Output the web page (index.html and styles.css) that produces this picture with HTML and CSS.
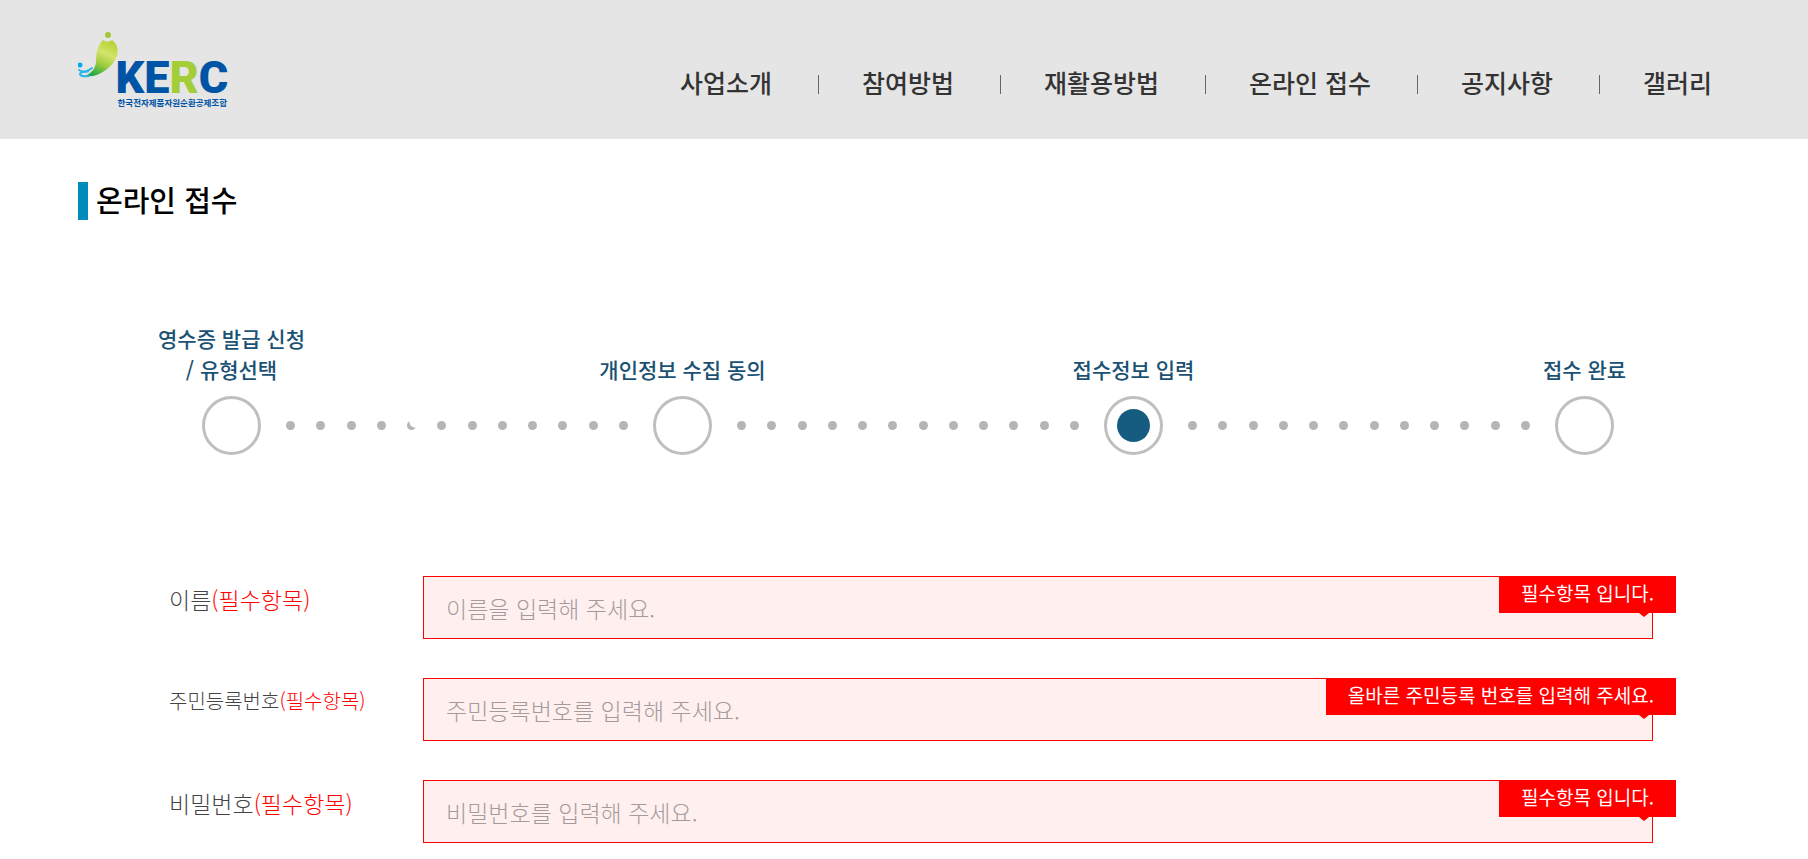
FILE: index.html
```
<!DOCTYPE html>
<html lang="ko">

<head>
    <meta charset="UTF-8">
    <meta name="viewport" content="width=device-width, initial-scale=1.0">
    <title>온라인 접수</title>
    <link rel="stylesheet" href="styles.css">
</head>

<body>
    <header class="header">
        <a href="#" class="logo" aria-label="KERC 한국전자제품자원순환공제조합">
            <svg width="152" height="80" viewBox="0 0 304 160">
                <defs>
                    <linearGradient id="leaf" x1="0.7" y1="0" x2="0.3" y2="1">
                        <stop offset="0" stop-color="#b5d334" />
                        <stop offset="0.35" stop-color="#d3e36b" />
                        <stop offset="0.65" stop-color="#9ccb3b" />
                        <stop offset="1" stop-color="#1fa64a" />
                    </linearGradient>
                </defs>
                <ellipse cx="60" cy="6" rx="6" ry="6" fill="#a2c73b" />
                <path d="M50 16 Q60 23 68 16 C77 22 83 36 77 50 C71 64 62 72 51 79 C40 87 28 90 14 88 C24 84 31 77 34 69 C37 61 36 52 37 43 C38 35 42 24 50 16Z" fill="url(#leaf)" />
                <circle cx="4" cy="66" r="5" fill="#00aeef" />
                <g fill="none" stroke="#29b6ea" stroke-width="4" stroke-linecap="round">
                    <path d="M2 76 Q9 81 18 78 Q24 75 28 72" />
                    <path d="M20 79 Q5 79 4 84 Q5 90 21 88" />
                </g>
                <text x="75" y="122" class="logo-name">KE<tspan class="logo-green">R</tspan>C</text>
                <text x="79" y="148" class="logo-sub">한국전자제품자원순환공제조합</text>
            </svg>
        </a>
        <nav>
            <ul class="menu">
                <li><a href="#">사업소개</a></li>
                <li><a href="#">참여방법</a></li>
                <li><a href="#">재활용방법</a></li>
                <li><a href="#">온라인 접수</a></li>
                <li><a href="#">공지사항</a></li>
                <li><a href="#">갤러리</a></li>
            </ul>
        </nav>
    </header>

    <main class="content">
        <h1 class="page-title">온라인 접수</h1>

        <div class="steps">
            <div class="step">
                <span class="step-name">영수증 발급 신청<br>/ 유형선택</span>
                <span class="step-circle"></span>
            </div>
            <div class="dots">
                <i></i><i></i><i></i><i></i><i class="cut"></i><i></i><i></i><i></i><i></i><i></i><i></i><i></i>
            </div>
            <div class="step">
                <span class="step-name">개인정보 수집 동의</span>
                <span class="step-circle"></span>
            </div>
            <div class="dots">
                <i></i><i></i><i></i><i></i><i></i><i></i><i></i><i></i><i></i><i></i><i></i><i></i>
            </div>
            <div class="step active">
                <span class="step-name">접수정보 입력</span>
                <span class="step-circle"></span>
            </div>
            <div class="dots">
                <i></i><i></i><i></i><i></i><i></i><i></i><i></i><i></i><i></i><i></i><i></i><i></i>
            </div>
            <div class="step">
                <span class="step-name">접수 완료</span>
                <span class="step-circle"></span>
            </div>
        </div>

        <form class="form">
            <div class="form-row">
                <label for="name">이름<em>(필수항목)</em></label>
                <div class="field">
                    <input type="text" id="name" placeholder="이름을 입력해 주세요.">
                    <span class="error">필수항목 입니다.</span>
                </div>
            </div>
            <div class="form-row">
                <label for="jumin" class="long">주민등록번호<em>(필수항목)</em></label>
                <div class="field">
                    <input type="text" id="jumin" placeholder="주민등록번호를 입력해 주세요.">
                    <span class="error">올바른 주민등록 번호를 입력해 주세요.</span>
                </div>
            </div>
            <div class="form-row">
                <label for="password">비밀번호<em>(필수항목)</em></label>
                <div class="field">
                    <input type="password" id="password" placeholder="비밀번호를 입력해 주세요.">
                    <span class="error">필수항목 입니다.</span>
                </div>
            </div>
        </form>
    </main>
</body>

</html>
```
FILE: styles.css
```
* {
    box-sizing: border-box;
}

body {
    margin: 0;
    font-family: "Noto Sans CJK KR", sans-serif;
    background-color: #fff;
    color: #444;
}

.header {
    display: flex;
    justify-content: space-between;
    align-items: flex-start;
    padding: 32px 96px 27px 78px;
    background-color: #e5e5e5;
}

.logo,
.logo svg {
    display: block;
}

.logo-name {
    font-family: Roboto, sans-serif;
    font-size: 90px;
    font-weight: 900;
    fill: #0054a6;
}

.logo-name .logo-green {
    fill: #a4ce39;
}

.logo-sub {
    font-size: 17px;
    font-weight: 700;
    fill: #0054a6;
}

.menu {
    display: flex;
    margin: 0;
    padding: 32px 0 0;
    list-style: none;
}

.menu li {
    display: flex;
    align-items: center;
}

.menu li + li::before {
    content: "";
    width: 1px;
    height: 19px;
    margin: 4px 43px 0 46px;
    background-color: #666;
}

.menu a {
    font-size: 25px;
    font-weight: 500;
    line-height: 36px;
    color: #333;
    text-decoration: none;
}

.content {
    padding: 43px 78px 0;
}

.page-title {
    margin: 0;
    padding: 0 0 4px 8px;
    border-left: 10px solid #008cba;
    font-size: 29px;
    font-weight: 500;
    line-height: 34px;
    color: #000;
}

/* progress */
.steps {
    display: flex;
    align-items: flex-end;
    margin: 103px 116px 121px 124px;
}

.step {
    display: flex;
    flex-direction: column;
    align-items: center;
    width: 59px;
}

.step-name {
    margin-bottom: 11px;
    font-size: 21px;
    font-weight: 500;
    line-height: 31px;
    color: #1b5273;
    text-align: center;
    white-space: nowrap;
}

.step-circle {
    display: flex;
    align-items: center;
    justify-content: center;
    width: 59px;
    height: 59px;
    border: 3px solid #bfbfbf;
    border-radius: 50%;
}

.step.active .step-circle::before {
    content: "";
    width: 33px;
    height: 33px;
    border-radius: 50%;
    background-color: #165c80;
}

.dots {
    flex: 1;
    display: flex;
    justify-content: space-between;
    align-items: center;
    height: 59px;
    padding: 0 25px;
}

.dots i {
    width: 9px;
    height: 9px;
    border-radius: 50%;
    background-color: #b5b5b5;
}

.dots .cut {
    background: radial-gradient(circle at 8px 1px, #fff 5px, #b5b5b5 6px);
}

/* form */
.form {
    padding: 0 77px 0 91px;
}

.form-row {
    display: flex;
    align-items: flex-start;
    margin-bottom: 39px;
}

.form-row label {
    width: 254px;
    padding-top: 9px;
    font-size: 23px;
    font-weight: 300;
    line-height: 28px;
}

.form-row label em {
    font-style: normal;
    color: #f00;
}

.form-row label.long {
    font-size: 20px;
}

.field {
    position: relative;
    flex: 1;
}

.field input {
    display: block;
    width: 100%;
    height: 63px;
    padding: 0 22px;
    border: 1px solid #f00;
    border-radius: 0;
    background-color: #ffefef;
    font-family: inherit;
    font-size: 23px;
    font-weight: 300;
    color: #555;
}

.field input::placeholder {
    color: #a39b9b;
    opacity: 1;
}

.error {
    position: absolute;
    top: 0;
    right: -23px;
    padding: 0 22px 3px;
    background-color: #f00;
    font-size: 19px;
    font-weight: 400;
    line-height: 34px;
    color: #fff;
}

.error::after {
    content: "";
    position: absolute;
    top: 100%;
    right: 27px;
    border-top: 4px solid #f00;
    border-left: 5px solid transparent;
    border-right: 5px solid transparent;
}
```
